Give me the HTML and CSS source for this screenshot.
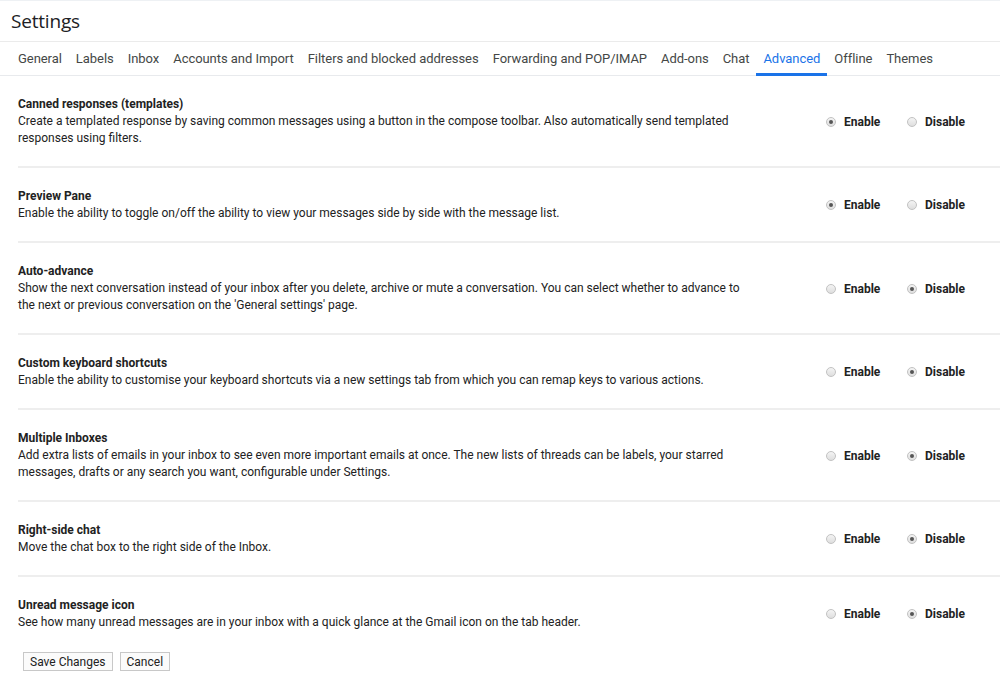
FILE: index.html
```html
<!DOCTYPE html>
<html lang="en">
<head>
    <meta charset="UTF-8">
    <meta name="viewport" content="width=device-width, initial-scale=1.0">
    <title>Settings</title>
    <link rel="stylesheet" href="styles.css">
</head>
<body>
    <header class="page-header">
        <h1>Settings</h1>
    </header>

    <nav class="tabs">
        <a class="tab">General</a>
        <a class="tab">Labels</a>
        <a class="tab">Inbox</a>
        <a class="tab">Accounts and Import</a>
        <a class="tab">Filters and blocked addresses</a>
        <a class="tab">Forwarding and POP/IMAP</a>
        <a class="tab">Add-ons</a>
        <a class="tab">Chat</a>
        <a class="tab active">Advanced</a>
        <a class="tab">Offline</a>
        <a class="tab">Themes</a>
    </nav>

    <div class="settings">
        <div class="setting">
            <div class="setting-text">
                <h3>Canned responses (templates)</h3>
                <p>Create a templated response by saving common messages using a button in the compose toolbar. Also automatically send templated responses using filters.</p>
            </div>
            <div class="options">
                <label class="option"><input type="radio" name="canned" checked> Enable</label>
                <label class="option"><input type="radio" name="canned"> Disable</label>
            </div>
        </div>

        <div class="setting">
            <div class="setting-text">
                <h3>Preview Pane</h3>
                <p>Enable the ability to toggle on/off the ability to view your messages side by side with the message list.</p>
            </div>
            <div class="options">
                <label class="option"><input type="radio" name="preview" checked> Enable</label>
                <label class="option"><input type="radio" name="preview"> Disable</label>
            </div>
        </div>

        <div class="setting">
            <div class="setting-text">
                <h3>Auto-advance</h3>
                <p>Show the next conversation instead of your inbox after you delete, archive or mute a conversation. You can select whether to advance to the next or previous conversation on the 'General settings' page.</p>
            </div>
            <div class="options">
                <label class="option"><input type="radio" name="advance"> Enable</label>
                <label class="option"><input type="radio" name="advance" checked> Disable</label>
            </div>
        </div>

        <div class="setting">
            <div class="setting-text">
                <h3>Custom keyboard shortcuts</h3>
                <p>Enable the ability to customise your keyboard shortcuts via a new settings tab from which you can remap keys to various actions.</p>
            </div>
            <div class="options">
                <label class="option"><input type="radio" name="shortcuts"> Enable</label>
                <label class="option"><input type="radio" name="shortcuts" checked> Disable</label>
            </div>
        </div>

        <div class="setting">
            <div class="setting-text">
                <h3>Multiple Inboxes</h3>
                <p>Add extra lists of emails in your inbox to see even more important emails at once. The new lists of threads can be labels, your starred messages, drafts or any search you want, configurable under Settings.</p>
            </div>
            <div class="options">
                <label class="option"><input type="radio" name="multi"> Enable</label>
                <label class="option"><input type="radio" name="multi" checked> Disable</label>
            </div>
        </div>

        <div class="setting">
            <div class="setting-text">
                <h3>Right-side chat</h3>
                <p>Move the chat box to the right side of the Inbox.</p>
            </div>
            <div class="options">
                <label class="option"><input type="radio" name="chat"> Enable</label>
                <label class="option"><input type="radio" name="chat" checked> Disable</label>
            </div>
        </div>

        <div class="setting">
            <div class="setting-text">
                <h3>Unread message icon</h3>
                <p>See how many unread messages are in your inbox with a quick glance at the Gmail icon on the tab header.</p>
            </div>
            <div class="options">
                <label class="option"><input type="radio" name="unread"> Enable</label>
                <label class="option"><input type="radio" name="unread" checked> Disable</label>
            </div>
        </div>
    </div>

    <div class="actions">
        <button>Save Changes</button>
        <button>Cancel</button>
    </div>
</body>
</html>
```

FILE: styles.css
```css
body {
    font-family: Roboto, "Liberation Sans", Arial, sans-serif;
    margin: 0;
    padding: 0;
    color: #222;
    background-color: #fff;
}
.page-header {
    border-top: 1px solid #eef1f4;
    border-bottom: 1px solid #ebebeb;
    height: 40px;
    display: flex;
    align-items: center;
    padding-left: 11px;
}
h1 {
    margin: 0;
    font-family: "Open Sans", Roboto, sans-serif;
    font-size: 19px;
    font-weight: 400;
    color: #202124;
    letter-spacing: -0.2px;
}
.tabs {
    display: flex;
    padding-left: 11px;
    height: 33px;
    border-bottom: 1px solid #e8eaed;
}
.tab {
    padding: 0 7px;
    font-size: 13px;
    line-height: 33px;
    color: #444746;
    letter-spacing: -0.05px;
    border-bottom: 3px solid transparent;
    margin-bottom: -1px;
}
.tab.active {
    color: #1a73e8;
    border-bottom-color: #1a73e8;
}
.settings {
    padding-left: 18px;
}
.setting {
    display: flex;
    align-items: center;
    padding: 20px 0 19px;
    border-bottom: 2px solid #eeeeee;
}
.setting:last-child {
    border-bottom: none;
    padding-bottom: 21px;
}
.setting-text {
    width: 725px;
    font-size: 12px;
    line-height: 17px;
}
.setting-text h3 {
    margin: 0;
    font-size: 12px;
    font-weight: 700;
    color: #222;
}
.setting-text p {
    margin: 0;
    color: #222;
}
.options {
    display: flex;
    margin-left: 83px;
}
.option {
    display: flex;
    align-items: center;
    width: 81px;
    font-size: 12px;
    font-weight: 700;
    color: #222;
}
.option input {
    appearance: none;
    -webkit-appearance: none;
    width: 10px;
    height: 10px;
    margin: 0 8px 0 0;
    border: 1px solid #c2c2c2;
    border-radius: 50%;
    background: linear-gradient(#f4f4f4, #dedede);
    position: relative;
}
.option input:checked::after {
    content: "";
    position: absolute;
    left: 2px;
    top: 2px;
    width: 4px;
    height: 4px;
    border-radius: 50%;
    background: #555;
}
.actions {
    display: flex;
    gap: 7px;
    padding-left: 23px;
}
button {
    font-family: Roboto, "Liberation Sans", Arial, sans-serif;
    font-size: 12px;
    color: #222;
    background: #fbfbfb;
    border: 1px solid #c8c8c8;
    padding: 0 6px;
    height: 19px;
    margin: 0;
}
```
